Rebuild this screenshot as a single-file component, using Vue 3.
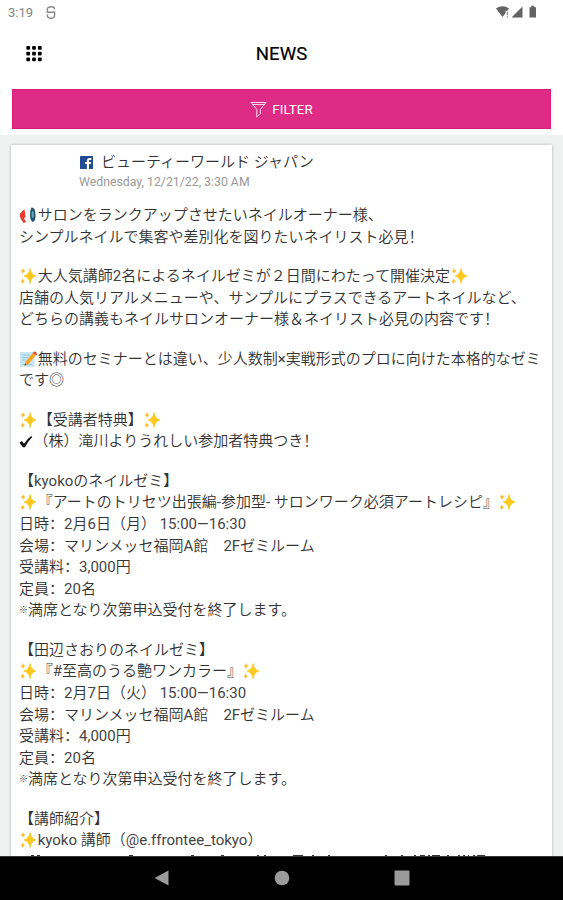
<script setup>
const lines = [
  '📢サロンをランクアップさせたいネイルオーナー様、',
  'シンプルネイルで集客や差別化を図りたいネイリスト必見！',
  '',
  '✨大人気講師2名によるネイルゼミが２日間にわたって開催決定✨',
  '店舗の人気リアルメニューや、サンプルにプラスできるアートネイルなど、',
  'どちらの講義もネイルサロンオーナー様＆ネイリスト必見の内容です！',
  '',
  '📝無料のセミナーとは違い、少人数制×実戦形式のプロに向けた本格的なゼミ',
  'です◎',
  '',
  '✨【受講者特典】✨',
  '✔（株）滝川よりうれしい参加者特典つき！',
  '',
  '【kyokoのネイルゼミ】',
  '✨『アートのトリセツ出張編-参加型- サロンワーク必須アートレシピ』✨',
  '日時：2月6日（月） 15:00—16:30',
  '会場：マリンメッセ福岡A館　2Fゼミルーム',
  '受講料：3,000円',
  '定員：20名',
  '※満席となり次第申込受付を終了します。',
  '',
  '【田辺さおりのネイルゼミ】',
  '✨『#至高のうる艶ワンカラー』✨',
  '日時：2月7日（火） 15:00—16:30',
  '会場：マリンメッセ福岡A館　2Fゼミルーム',
  '受講料：4,000円',
  '定員：20名',
  '※満席となり次第申込受付を終了します。',
  '',
  '【講師紹介】',
  '✨kyoko 講師（@e.ffrontee_tokyo）'
]

// split symbols and latin runs from the japanese text
const parts = (line) => line.split(/(📢|✨|📝|✔|※|[\x20-\x7e—×]+)/u).filter(Boolean)
const isLatin = (p) => /^[\x20-\x7e—×]/.test(p)

// tops of the next line, peeking out above the navigation bar: [x, width]
const peeks = [
  [12, 3], [18, 3], [110, 4], [172, 3], [202, 3], [238, 2], [245, 2],
  [274, 10], [293, 2], [309, 2], [366, 2], [382, 2], [395, 2], [401, 5],
  [409, 2], [413, 8], [428, 2], [439, 2], [444, 2], [449, 1], [454, 2], [458, 8]
]
</script>

<template>
  <div class="screen">
    <div class="status-bar">
      <span class="time">3:19</span>
      <svg class="s-icon" width="10" height="13" viewBox="0 0 10 13" fill="none" stroke="#888" stroke-width="1.4"><path d="M8.500 3.300V2.500C8.300 1.300 7 .800 5 .800S1.400 1.400 1.400 3v3.200h7.200v3.300c0 1.900-1.300 2.700-3.600 2.700s-3.600-.8-3.600-2.700V8.600" /></svg>
      <div class="status-right">
        <svg width="42" height="14" viewBox="0 0 42 14" fill="#636363">
          <path d="M0 3.600C3.600.300 9.400.300 13 3.600L11.300 5.700H9.600V8L6.500 12z" />
          <path d="M10.800 6.500h1.300v3.800h-1.300zM10.800 11.200h1.300v1.300h-1.300z" fill="#999" />
          <path d="M15.500 12.500L26.500 1.500v11z" />
          <path d="M33.500 2.200h1.800V.8h3v1.400h1.700v10.400h-6.500z" />
        </svg>
      </div>
    </div>

    <header class="nav-header">
      <svg class="menu" width="16" height="16" viewBox="0 0 16 16">
        <template v-for="r in 3" :key="r">
          <rect v-for="c in 3" :key="c" :x="(c - 1) * 5.8 + 0.3" :y="(r - 1) * 5.7" width="3.800" height="3.800" rx="1" />
        </template>
      </svg>
      <h1>NEWS</h1>
    </header>

    <div class="filter-wrap">
      <button class="filter-btn">
        <svg width="17" height="17" viewBox="0 0 17 17" fill="none" stroke="#fff" stroke-opacity=".85" stroke-width="1"><path d="M1 1.500h15L10.300 8.500v4.300L6.800 15.800V8.500zM2.600 3.600h11.700" /></svg>
        <span>FILTER</span>
      </button>
    </div>

    <main class="feed">
      <article class="card">
        <div class="card-head">
          <div class="source">
            <svg width="13" height="13" viewBox="0 0 13 13"><rect width="13" height="13" rx=".5" fill="#234b91" /><path d="M9 13V8.100h1.900l.3-2H9V4.900c0-.7.300-1 1.100-1h1.200V2c-.3 0-.9-.1-1.600-.1C8 1.900 6.900 2.900 6.900 4.600v1.500H5.100v2h1.800V13z" fill="#fff" /></svg>
            <span>ビューティーワールド ジャパン</span>
          </div>
          <div class="date">Wednesday, 12/21/22, 3:30 AM</div>
        </div>

        <div class="post">
          <div v-for="(line, i) in lines" :key="i" class="line" :class="{ blank: !line }">
            <template v-for="(p, j) in parts(line)" :key="j">
              <svg v-if="p === '✨'" class="emoji" viewBox="0 0 18 18">
                <path d="M11 1.500q.8 6.200 6 7.500-5.200 1.300-6 7.500-.8-6.200-6-7.500 5.200-1.300 6-7.500z" fill="#fdc91f" stroke="#fdc91f" stroke-width=".8" />
                <path d="M4 1q.4 2.600 2.500 3.100Q4.400 4.600 4 7.200 3.600 4.600 1.500 4.100 3.600 3.600 4 1zM3.700 11.500q.4 2.300 2.300 2.800-1.900.5-2.300 2.800-.4-2.300-2.300-2.800 1.900-.5 2.300-2.800z" fill="#fbbd2c" />
              </svg>
              <svg v-else-if="p === '📢'" class="emoji" viewBox="0 0 18 18">
                <path d="M1 7.500L5.500 3l1.300 8.300-2 .7 2.300 4-2.400 1L1.800 13Q.3 10 1 7.500z" fill="#e8392d" />
                <path d="M5.500 3L12 1.500v13.800L6.800 11.300z" fill="#f3f5f6" />
                <path d="M12.500 1.500q3.500-.5 4 6.500t-2.900 8q-2.600-2-2.600-7t1.500-7.500z" fill="#24516b" />
                <ellipse cx="13.700" cy="8.500" rx="1.200" ry="3.600" fill="#5ba8bd" />
              </svg>
              <svg v-else-if="p === '📝'" class="emoji" viewBox="0 0 18 18">
                <path d="M1 2h14.500v15H1z" fill="#c9e6f6" />
                <path d="M3 5h8M3 7.500h6M3 10h4M3 14.500h10" stroke="#8bbfdc" stroke-width=".8" />
                <path d="M5.500 15.500l1-4L13.800 3l3 2.600-7.500 8.600z" fill="#f6a623" />
                <path d="M13.800 3l1.100-1.300q1.500-.5 2.800 1.200l.1 1.400-1 1.300z" fill="#e8483b" />
                <path d="M5.500 15.500l.6-2 1.300 1.200z" fill="#333" />
              </svg>
              <svg v-else-if="p === '✔'" class="check" viewBox="0 0 15 18"><path d="M.5 10.700l2.500-1.700 2.200 2.800Q8.500 6.500 12.800 3.800l.9 1Q9.500 9 6.200 15.500H4z" fill="#111" /></svg>
              <span v-else-if="p === '※'" class="kome">※</span>
              <span v-else :class="{ latin: isLatin(p) }">{{ p }}</span>
            </template>
          </div>
          <svg class="peek" width="524" height="4" viewBox="0 0 524 4" fill="#333">
            <rect v-for="[x, w] in peeks" :key="x" :x="x" y="0" :width="w" height="4" />
          </svg>
        </div>
      </article>
    </main>

    <nav class="android-nav">
      <svg width="16" height="16" viewBox="0 0 16 16" fill="#9b9b9b"><path d="M.5 8L14.500.500v15z" /></svg>
      <svg width="16" height="16" viewBox="0 0 16 16" fill="#9b9b9b"><circle cx="8" cy="8" r="7.300" /></svg>
      <svg width="16" height="16" viewBox="0 0 16 16" fill="#9b9b9b"><rect x=".5" y=".5" width="15" height="15" rx="1" /></svg>
    </nav>
  </div>
</template>

<style>
body {
  margin: 0;
  overflow: hidden;
}
</style>

<style scoped>
.screen {
  width: 563px;
  height: 900px;
  overflow: hidden;
  display: flex;
  flex-direction: column;
  background: #fff;
  font-family: Roboto, "Noto Sans CJK SC", sans-serif;
}

.status-bar {
  height: 24px;
  flex: none;
  box-sizing: border-box;
  padding: 0 24px 0 8px;
  display: flex;
  align-items: center;
}
.time {
  font-size: 13px;
  color: #858585;
}
.s-icon {
  margin-left: 13px;
}
.status-right {
  margin-left: auto;
  display: flex;
  padding-right: 1px;
}

.nav-header {
  height: 65px;
  flex: none;
  display: grid;
  grid-template-columns: 1fr auto 1fr;
  align-items: center;
  padding: 0 26px 6px;
  box-sizing: border-box;
}
.nav-header h1 {
  margin: 0;
  padding-top: 1px;
  font-size: 18.6px;
  font-weight: 400;
  line-height: 20px;
  color: #000;
  -webkit-text-stroke: 0.2px #000;
}

.filter-wrap {
  flex: none;
  padding: 0 12px 6px;
}
.filter-btn {
  width: 539px;
  height: 40px;
  display: flex;
  align-items: center;
  justify-content: center;
  gap: 5px;
  padding: 0;
  border: 1px solid #d91a78;
  background: #de2c86;
  color: #fff;
  font-family: Roboto, sans-serif;
  font-size: 13.4px;
  font-weight: 400;
}

.feed {
  flex: 1;
  min-height: 0;
  overflow: hidden;
  background: #f0f1f1;
  padding: 10px 11px 0;
}
.card {
  height: 760px;
  background: #fff;
  box-shadow: 0 0 3px rgba(0, 0, 0, 0.28);
  padding: 7px 8px 0;
}
.card-head {
  padding-left: 60px;
  height: 53.3px;
}
.source {
  display: flex;
  align-items: center;
  gap: 8px;
  height: 20px;
  font-size: 15px;
  font-weight: 350;
  color: #333;
}
.source svg {
  margin: 0 0 0 1px;
}
.source span {
  line-height: 20px;
}
.date {
  font-size: 12.3px;
  line-height: 20px;
  color: #999;
}

.post {
  font-size: 15px;
  font-weight: 350;
  color: #333;
}
.line {
  height: 21.6px;
  line-height: 21.6px;
  white-space: pre;
  display: flex;
}
.line.blank {
  height: 17.8px;
}
.latin {
  font-weight: 400;
  color: #444;
}
.emoji {
  width: 18px;
  height: 18px;
  margin: 1px 0.7px 0 0;
  flex: none;
}
.check {
  width: 14.5px;
  height: 18px;
  margin-top: 1px;
  flex: none;
}
.kome {
  font-size: 9px;
  font-weight: 500;
  width: 9px;
}
.peek {
  display: block;
  margin-top: 3px;
}

.android-nav {
  height: 44px;
  flex: none;
  box-sizing: border-box;
  border-top: 1px solid #333;
  background: #000;
  display: flex;
  align-items: center;
  justify-content: center;
  gap: 104px;
  padding-bottom: 1px;
}
</style>
